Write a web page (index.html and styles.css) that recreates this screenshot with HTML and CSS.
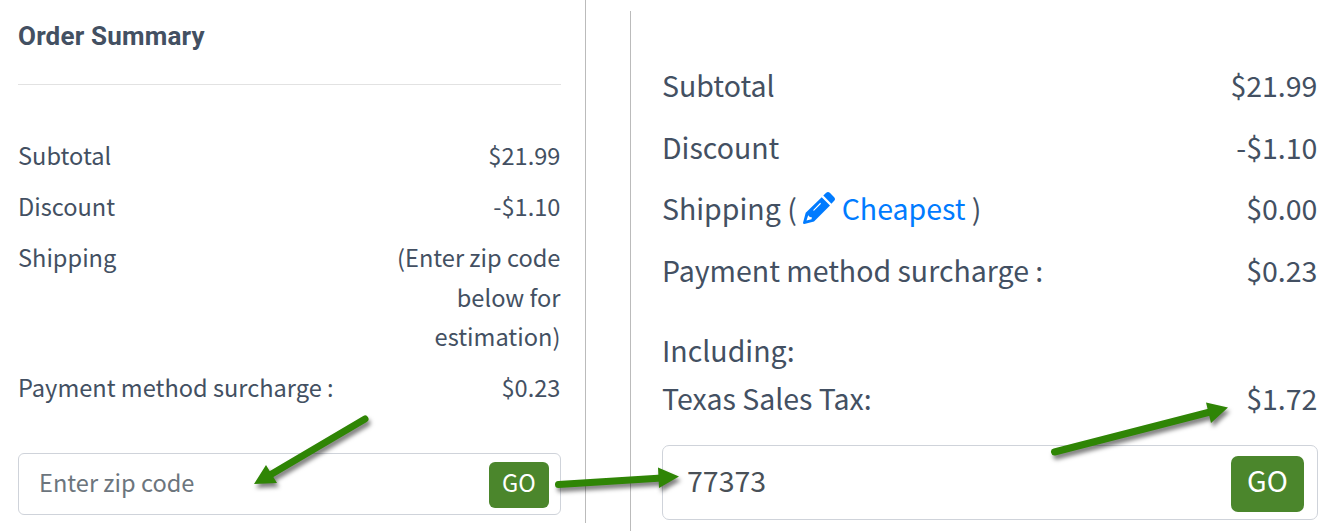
FILE: index.html
```
<!DOCTYPE html>
<html lang="en">
<head>
  <meta charset="UTF-8" />
  <meta name="viewport" content="width=device-width, initial-scale=1.0" />
  <title>Order Summary</title>
  <link rel="stylesheet" href="styles.css">
</head>
<body>
  <div class="page">
    <div class="summary before">
      <h2>Order Summary</h2>
      <div class="rows">
        <div class="row"><span>Subtotal</span><span>$21.99</span></div>
        <div class="row"><span>Discount</span><span>-$1.10</span></div>
        <div class="row">
          <span>Shipping</span>
          <span class="note">(Enter zip code below for estimation)</span>
        </div>
        <div class="row"><span>Payment method surcharge :</span><span>$0.23</span></div>
      </div>
      <div class="zip">
        <input type="text" placeholder="Enter zip code" aria-label="Zip code">
        <button>GO</button>
      </div>
    </div>

    <div class="summary after">
      <div class="rows">
        <div class="row"><span>Subtotal</span><span>$21.99</span></div>
        <div class="row"><span>Discount</span><span>-$1.10</span></div>
        <div class="row">
          <span class="shipping">Shipping (
            <a href="#"><svg class="pencil" viewBox="0 0 32 32"><path fill-rule="evenodd" d="M20.300 3.500L23.200 .8Q25-.8 26.800 .8L31.200 5.200Q32.800 7 31.200 8.800L28.400 11.700ZM18.700 5.200L27 13.400L11 29.400L1.300 32Q0 32 0 30.700L2.700 20.800ZM10 18.200L11 18.800L18 11.800L17.200 10.700ZM5.200 23.200L3.500 28.500L8.600 27.200L8.800 25.300L6.800 25Z"/></svg>Cheapest</a> )</span>
          <span>$0.00</span>
        </div>
        <div class="row"><span>Payment method surcharge :</span><span>$0.23</span></div>
      </div>
      <div class="tax">
        <div>Including:</div>
        <div class="row"><span>Texas Sales Tax:</span><span>$1.72</span></div>
      </div>
      <div class="zip">
        <input type="text" value="77373" aria-label="Zip code">
        <button>GO</button>
      </div>
    </div>

    <svg class="arrows" viewBox="0 0 1340 531">
      <path class="shaft" d="M365 419L270 475M558.500 484.500L662 478M1054.500 452L1212 411.500"/>
      <path class="head" d="M254 484L266 465L277 483ZM679 476.500L658 467.500L659 488ZM1228 407.500L1206 402.500L1211 423Z"/>
    </svg>
  </div>
</body>
</html>
```

FILE: styles.css
```
* {
  box-sizing: border-box;
}
body {
  margin: 0;
  background-color: #fff;
  color: #435062;
  font-family: "Noto Sans CJK SC", "Noto Sans", sans-serif;
}
.page {
  position: relative;
  display: flex;
  align-items: flex-start;
  gap: 44px;
  height: 531px;
  overflow: hidden;
}
.row {
  display: flex;
  justify-content: space-between;
  padding-right: 0.6px;
}
.row span {
  white-space: nowrap;
}
.before {
  width: 586px;
  height: 523px;
  padding: 0 24px 0 18px;
  border-right: 1px solid #bbb;
  font-size: 23.6px;
  line-height: 39.5px;
}
h2 {
  margin: 0;
  height: 85px;
  padding-top: 16px;
  border-bottom: 1px solid #e2e2e2;
  font-family: Roboto, sans-serif;
  font-size: 26px;
  font-weight: 700;
  letter-spacing: 0.2px;
  line-height: 40px;
}
.before .rows {
  display: flex;
  flex-direction: column;
  gap: 11.5px;
  padding-top: 51px;
}
.before .row .note {
  width: 180px;
  text-align: right;
  white-space: normal;
}
.after {
  width: 710px;
  height: 520px;
  margin-top: 11px;
  padding: 50px 22px 0 31px;
  border-left: 1px solid #bbb;
  font-size: 28.5px;
  line-height: 48px;
}
.after .rows {
  display: flex;
  flex-direction: column;
  gap: 13.7px;
}
.tax {
  margin-top: 32px;
}
a {
  color: #007bff;
  text-decoration: none;
}
.pencil {
  width: 32px;
  height: 32px;
  margin-right: 6.5px;
  vertical-align: -4px;
  fill: #007bff;
}
.zip {
  display: flex;
  align-items: center;
  border: 1px solid #cfd3da;
  border-radius: 6px;
}
.before .zip {
  height: 62px;
  margin-top: 45px;
  padding: 2px 11px 0 20px;
}
.after .zip {
  height: 75px;
  margin-top: 23px;
  padding: 2px 13px 0 24px;
  border-radius: 7px;
}
input {
  flex: 1;
  min-width: 0;
  padding: 0 0 4px;
  border: none;
  outline: none;
  background: none;
  color: #495057;
  font: inherit;
}
.after input {
  padding-bottom: 7px;
}
input::placeholder {
  color: #6c757d;
  opacity: 1;
}
button {
  width: 60px;
  height: 46px;
  padding: 0 0 6px;
  border: none;
  border-radius: 6px;
  background-color: #4b862c;
  color: #fff;
  font: inherit;
  line-height: 40px;
}
.after button {
  width: 73px;
  height: 56px;
  padding-bottom: 7px;
  border-radius: 7px;
}
/* pointers drawn over both panels */
.arrows {
  position: absolute;
  top: 0;
  left: 0;
  width: 1340px;
  height: 531px;
  pointer-events: none;
  filter: drop-shadow(2px 4px 2px rgba(0, 0, 0, 0.5));
}
.shaft {
  fill: none;
  stroke: #2f8505;
  stroke-width: 7;
  stroke-linecap: round;
}
.head {
  fill: #2f8505;
}
```
